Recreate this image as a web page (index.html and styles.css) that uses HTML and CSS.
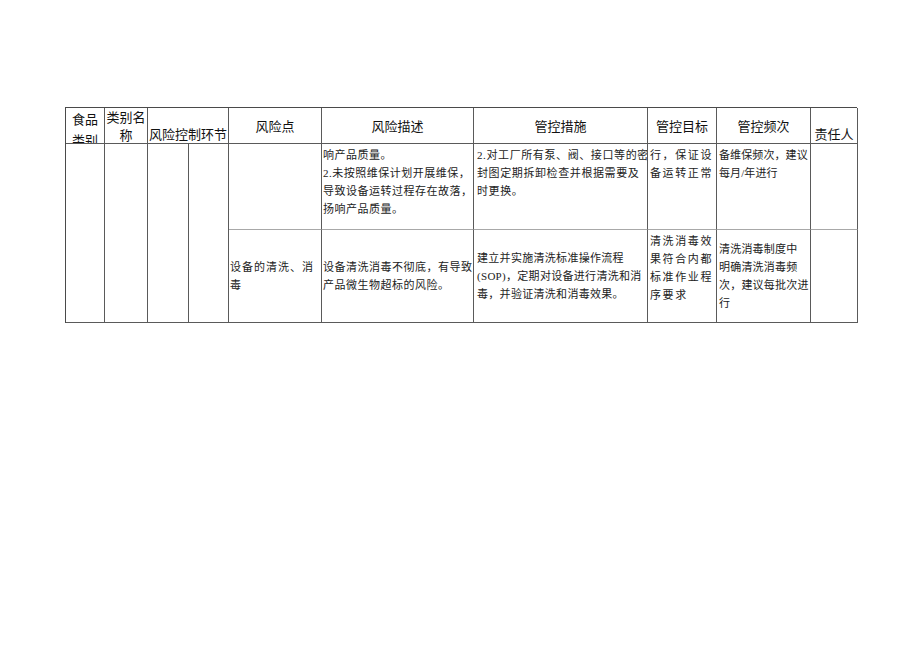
FILE: index.html
```html
<!DOCTYPE html>
<html lang="zh-CN">
<head>
<meta charset="utf-8">
<title>风险控制表</title>
<link rel="stylesheet" href="styles.css">
</head>
<body>
<div class="sheet">
  <div class="grid">
    <div class="cell h c1 top lh21">食品<br>类别</div>
    <div class="cell h c2 top">类别名<br>称</div>
    <div class="cell h c34 bottom">风险控制环节</div>
    <div class="cell h c5 mid">风险点</div>
    <div class="cell h c6 mid">风险描述</div>
    <div class="cell h c7 mid">管控措施</div>
    <div class="cell h c8 mid">管控目标</div>
    <div class="cell h c9 mid">管控频次</div>
    <div class="cell h c10 bottom">责任人</div>

    <div class="cell span c1"></div>
    <div class="cell span c2"></div>
    <div class="cell span c3"></div>
    <div class="cell span c4"></div>

    <div class="cell b r1 c5"></div>
    <div class="cell b r1 c6 t-desc">响产品质量。<br>2.未按照维保计划开展维保，<br>导致设备运转过程存在故落，<br>扬响产品质量。</div>
    <div class="cell b r1 c7 t-meas">2.对工厂所有泵、阀、接口等的密<br>封图定期拆卸检查并根据需要及<br>时更换。</div>
    <div class="cell b r1 c8 t-goal">行，保证设<br>备运转正常</div>
    <div class="cell b r1 c9 t-freq">备维保频次，建议<br>每月/年进行</div>
    <div class="cell b r1 c10"></div>

    <div class="cell b r2 c5 mid t-point">设备的清洗、消<br>毒</div>
    <div class="cell b r2 c6 mid t-desc">设备清洗消毒不彻底，有导致<br>产品微生物超标的风险。</div>
    <div class="cell b r2 c7 mid t-meas2">建立并实施清洗标准操作流程<br>(SOP)，定期对设备进行清洗和消<br>毒，并验证清洗和消毒效果。</div>
    <div class="cell b r2 c8 t-goal goal2">清洗消毒效<br>果符合内都<br>标准作业程<br>序要求</div>
    <div class="cell b r2 c9 mid t-freq2">清洗消毒制度中<br>明确清洗消毒频<br>次，建议每批次进<br>行</div>
    <div class="cell b r2 c10"></div>
  </div>
</div>
</body>
</html>
```

FILE: styles.css
```css
html, body {
  margin: 0;
  padding: 0;
  background: #ffffff;
}

.sheet {
  padding: 107px 0 0 65px;
}

.grid {
  display: grid;
  grid-template-columns: 39px 43px 41px 40px 93px 152px 174px 69px 94px 47px;
  grid-template-rows: 36px 86px 93px;
  width: 792px;
  box-sizing: border-box;
  border-left: 1px solid #4a4a4a;
  border-top: 1px solid #4a4a4a;
}

.cell {
  box-sizing: border-box;
  border-right: 1px solid #5a5a5a;
  border-bottom: 1px solid #5a5a5a;
  overflow: hidden;
  display: flex;
  flex-direction: column;
  white-space: nowrap;
}

.h {
  grid-row: 1;
  font-family: "Noto Sans CJK SC", "Noto Sans", sans-serif;
  font-size: 13px;
  line-height: 18px;
  color: #111;
  text-align: center;
  align-items: center;
}

.h.top { justify-content: flex-start; }
.h.mid { justify-content: center; }
.h.bottom { justify-content: flex-end; }
.lh21 { line-height: 21px; }

.c1 { grid-column: 1; }
.c2 { grid-column: 2; }
.c3 { grid-column: 3; }
.c4 { grid-column: 4; }
.c34 { grid-column: 3 / span 2; }
.c5 { grid-column: 5; }
.c6 { grid-column: 6; }
.c7 { grid-column: 7; }
.c8 { grid-column: 8; }
.c9 { grid-column: 9; }
.c10 { grid-column: 10; }

.span {
  grid-row: 2 / span 2;
}

.b {
  font-family: "Liberation Serif", "Noto Sans CJK SC", serif;
  font-size: 11px;
  line-height: 18px;
  color: #222;
  letter-spacing: 0.6px;
  padding: 2px 0 0 2px;
}

.r1 {
  grid-row: 2;
  border-bottom: 1px solid #a8a8a8;
}

.r2 {
  grid-row: 3;
}

.b.mid {
  justify-content: center;
  padding-top: 0;
}

.t-desc { padding-left: 1px; letter-spacing: 0.5px; }
.t-meas { padding-left: 3px; letter-spacing: 0.6px; }
.t-meas2 { padding-left: 3px; letter-spacing: 0.3px; }
.t-goal { padding-left: 2px; letter-spacing: 1.6px; }
.goal2 { padding-top: 2px; }
.t-freq { padding-left: 2px; letter-spacing: 0.1px; }
.t-freq2 { padding-left: 2px; letter-spacing: 0.2px; padding-top: 4px; }
.t-point { padding-left: 1px; letter-spacing: 1px; }
```
